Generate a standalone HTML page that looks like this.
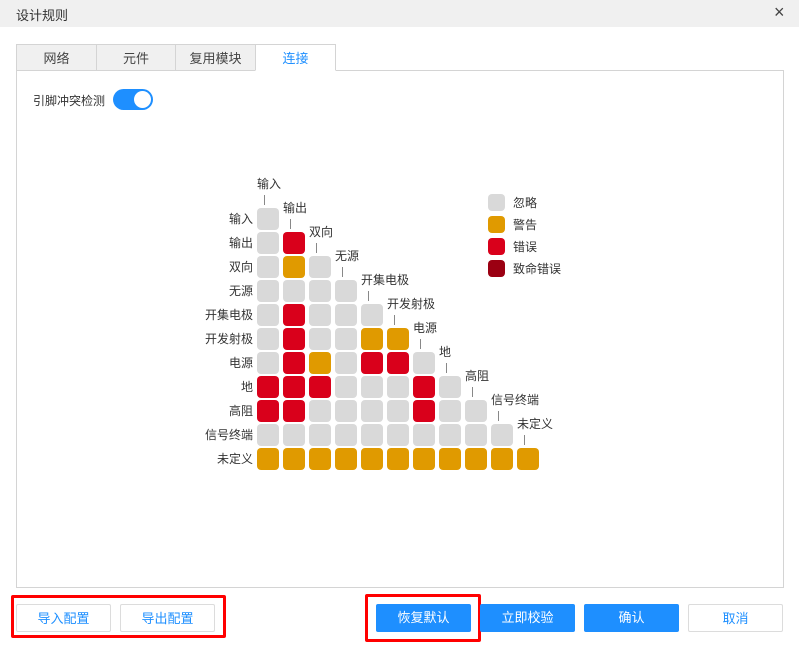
<!DOCTYPE html><html><head><meta charset="utf-8"><style>
body{margin:0;width:799px;height:649px;background:#fff;font-family:"Liberation Sans","Noto Sans CJK SC",sans-serif;font-size:12px;color:#333;position:relative;overflow:hidden}
.a{position:absolute}
.tab{position:absolute;top:44px;height:27px;line-height:27px;text-align:center;background:#f0f0f0;border:1px solid #d4d4d4;box-sizing:border-box;font-size:13px;color:#444}
.c{position:absolute;width:22px;height:22px;border-radius:4px}
.l{position:absolute;width:17px;height:17px;border-radius:4px}
.G{background:#d9d9d9}.R{background:#d9001b}.O{background:#e09a00}.D{background:#9b0012}
.rl{position:absolute;width:60px;text-align:right;font-size:12px;line-height:22px}
.cl{position:absolute;font-size:12px;white-space:nowrap}
.tk{position:absolute;width:1px;height:10px;background:#888}
.btn{position:absolute;top:604px;height:28px;line-height:28px;width:95px;text-align:center;box-sizing:border-box;border-radius:2px;font-size:13px}
.w{border:1px solid #dcdcdc;color:#1e8fff;background:#fff}
.b{background:#1e8fff;color:#fff}
</style></head><body>
<div class="a" style="left:0;top:0;width:799px;height:27px;background:#f0f0f0"></div>
<div class="a" style="left:16px;top:5px;font-size:13px">设计规则</div>
<div class="a" style="left:774px;top:2px;font-size:18px;color:#444">×</div>
<div class="a" style="left:16px;top:70px;width:768px;height:518px;border:1px solid #d4d4d4;box-sizing:border-box"></div>
<div class="tab" style="left:16px;width:81px">网络</div>
<div class="tab" style="left:96px;width:80px">元件</div>
<div class="tab" style="left:175px;width:81px">复用模块</div>
<div class="tab" style="left:255px;width:81px;background:#fff;border-bottom-color:#fff;color:#1e8fff">连接</div>
<div class="a" style="left:33px;top:92px;font-size:12px">引脚冲突检测</div>
<div class="a" style="left:113px;top:89px;width:40px;height:21px;border-radius:11px;background:#1e8fff"><div class="a" style="left:21px;top:2px;width:17px;height:17px;border-radius:50%;background:#fff"></div></div>
<div id="g"></div>
<div class="l G" style="left:488px;top:194px"></div><div class="cl" style="left:513px;top:194px">忽略</div>
<div class="l O" style="left:488px;top:216px"></div><div class="cl" style="left:513px;top:216px">警告</div>
<div class="l R" style="left:488px;top:238px"></div><div class="cl" style="left:513px;top:238px">错误</div>
<div class="l D" style="left:488px;top:260px"></div><div class="cl" style="left:513px;top:260px">致命错误</div>
<div class="a" style="left:11px;top:595px;width:215px;height:43px;border:3px solid #f00;box-sizing:border-box;border-radius:2px"></div>
<div class="a" style="left:365px;top:594px;width:116px;height:48px;border:3px solid #f00;box-sizing:border-box;border-radius:2px"></div>
<div class="btn w" style="left:16px">导入配置</div>
<div class="btn w" style="left:120px">导出配置</div>
<div class="btn b" style="left:376px">恢复默认</div>
<div class="btn b" style="left:480px">立即校验</div>
<div class="btn b" style="left:584px">确认</div>
<div class="btn w" style="left:688px;color:#1e8fff">取消</div>
<script>
var n=["输入","输出","双向","无源","开集电极","开发射极","电源","地","高阻","信号终端","未定义"];
var m=["G","GR","GOG","GGGG","GRGGG","GRGGOO","GROGRRG","RRRGGGRG","RRGGGGRGG","GGGGGGGGGG","OOOOOOOOOOO"];
var h="";
for(var i=0;i<11;i++){var y=208+24*i;
h+='<div class="rl" style="left:193px;top:'+y+'px">'+n[i]+'</div>';
for(var j=0;j<=i;j++){h+='<div class="c '+m[i][j]+'" style="left:'+(257+26*j)+'px;top:'+y+'px"></div>';}
var x=257+26*i,t=208+24*i;
h+='<div class="cl" style="left:'+x+'px;top:'+(t-33)+'px">'+n[i]+'</div>';
h+='<div class="tk" style="left:'+(x+7)+'px;top:'+(t-13)+'px"></div>';}
document.getElementById("g").innerHTML=h;
</script>
</body></html>
